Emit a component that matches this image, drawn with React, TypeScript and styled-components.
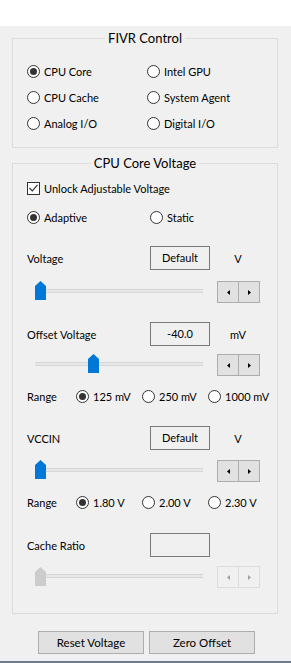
import React from 'react';
import styled, { createGlobalStyle } from 'styled-components';

const Global = createGlobalStyle`
  html, body { margin: 0; padding: 0; background: #f0f0f0; }
  body {
    width: 291px; height: 663px; overflow: hidden;
    font-family: Lato, "Liberation Sans", sans-serif; font-size: 11px; color: #000;
  }
  * { box-sizing: border-box; }
`;

const Window = styled.div`
  width: 291px; height: 663px;
  display: flex; flex-direction: column;
  background: #f0f0f0;
  border-bottom: 2px solid #6b7a8c;
`;

const TopStrip = styled.div`
  height: 26px; flex: none; background: #ffffff;
`;

const Group = styled.fieldset<{ $top: number; $pbottom: number }>`
  margin: ${p => p.$top}px 13px 0 12px;
  padding: 0 0 ${p => p.$pbottom}px 0;
  border: 1px solid #dcdcdc;
  min-width: 0;
`;

const GroupBody = styled.div<{ $ptop: number }>`
  display: flex; flex-direction: column;
  padding: ${p => p.$ptop}px 0 0 14px;
`;

const Legend = styled.legend`
  margin: 0 auto; padding: 0 3px;
  font-size: 13px; line-height: 16px;
`;

const RadioGrid = styled.div`
  display: grid;
  grid-template-columns: 120px 1fr;
  grid-auto-rows: 26px;
  align-items: center;
`;

const OptionLabel = styled.label<{ $w?: number }>`
  display: flex; align-items: center; gap: 4px;
  ${p => (p.$w ? `width: ${p.$w}px; flex: none;` : '')}
  white-space: nowrap;
`;

const RadioCircle = styled.span<{ $on?: boolean }>`
  width: 13px; height: 13px; flex: none;
  border: 1px solid #333333; border-radius: 50%;
  background: #ffffff;
  display: flex; align-items: center; justify-content: center;
  &::after {
    content: '';
    width: 7px; height: 7px; border-radius: 50%;
    background: ${p => (p.$on ? '#333333' : 'transparent')};
  }
`;

const CheckBox = styled.span`
  width: 13px; height: 13px; flex: none;
  border: 1px solid #333333; background: #ffffff;
  display: flex; align-items: center; justify-content: center;
`;

const Row = styled.div<{ $mt: number; $h?: number }>`
  display: flex; align-items: center;
  margin-top: ${p => p.$mt}px;
  height: ${p => p.$h ?? 20}px;
  flex: none;
`;

const FieldLabel = styled.span<{ $w: number }>`
  width: ${p => p.$w}px; flex: none; white-space: nowrap;
`;

const ValueBox = styled.div`
  width: 60px; height: 24px; flex: none;
  border: 1px solid #7a7a7a; background: #f0f0f0;
  display: flex; align-items: center; justify-content: center;
  padding-bottom: 2px;
`;

const Unit = styled.span`
  width: 42px; margin-left: 7px; text-align: center; flex: none;
`;

const SliderRow = styled.div<{ $mt: number }>`
  display: flex; align-items: flex-start;
  margin-top: ${p => p.$mt}px;
  padding-left: 8px;
  height: 22px; flex: none;
`;

const Slider = styled.div`
  position: relative; width: 168px; height: 22px; flex: none;
`;

const Track = styled.div`
  margin-top: 8px; height: 4px;
  border-top: 1px solid #d6d6d6; border-bottom: 1px solid #d6d6d6;
  background: #e7e7e7;
`;

const Thumb = styled.div<{ $disabled?: boolean }>`
  position: absolute; top: 0;
  width: 11px; height: 19px;
  background: ${p => (p.$disabled ? '#cccccc' : '#0078d7')};
  clip-path: polygon(0 5px, 5.5px 0, 11px 5px, 11px 19px, 0 19px);
`;

const Spin = styled.div<{ $disabled?: boolean }>`
  margin-left: 14px; height: 22px; flex: none;
  display: flex;
  border: 1px solid ${p => (p.$disabled ? '#dcdcdc' : '#adadad')};
  background: ${p => (p.$disabled ? '#f0f0f0' : '#e1e1e1')};
  color: ${p => (p.$disabled ? '#a0a0a0' : '#000000')};
`;

const SpinButton = styled.div`
  width: 20px; height: 20px;
  display: flex; align-items: center; justify-content: center;
`;

const SpinDivider = styled.div<{ $disabled?: boolean }>`
  width: 1px; background: ${p => (p.$disabled ? '#dcdcdc' : '#adadad')};
`;

const ButtonRow = styled.div`
  display: flex; gap: 5px;
  margin-top: 17px; padding-left: 38px;
`;

const PushButton = styled.button`
  width: 106px; height: 23px;
  border: 1px solid #adadad; background: #e1e1e1;
  font: inherit; font-size: 11.5px; color: #000; padding: 0;
`;

const Arrow = ({ dir }: { dir: 'l' | 'r' }) => (
  <svg width="3" height="5" viewBox="0 0 3 5">
    <polygon points={dir === 'l' ? '3,0 3,5 0,2.5' : '0,0 0,5 3,2.5'} fill="currentColor" />
  </svg>
);

const Radio = ({ label, on, w }: { label: string; on?: boolean; w?: number }) => (
  <OptionLabel $w={w}>
    <RadioCircle $on={on} />
    {label}
  </OptionLabel>
);

const SliderLine = ({ mt, pos, disabled }: { mt: number; pos: number; disabled?: boolean }) => (
  <SliderRow $mt={mt}>
    <Slider>
      <Track />
      <Thumb $disabled={disabled} style={{ left: pos, top: disabled ? 1 : 0 }} />
    </Slider>
    <Spin $disabled={disabled}>
      <SpinButton><Arrow dir="l" /></SpinButton>
      <SpinDivider $disabled={disabled} />
      <SpinButton><Arrow dir="r" /></SpinButton>
    </Spin>
  </SliderRow>
);

const ValueLine = ({ mt, label, value, unit }: { mt: number; label: string; value: string; unit: string }) => (
  <Row $mt={mt} $h={24}>
    <FieldLabel $w={123}>{label}</FieldLabel>
    <ValueBox>{value}</ValueBox>
    <Unit>{unit}</Unit>
  </Row>
);

const RangeLine = ({ mt, options }: { mt: number; options: string[] }) => (
  <Row $mt={mt}>
    <FieldLabel $w={49}>Range</FieldLabel>
    {options.map((o, i) => (
      <Radio key={o} label={o} on={i === 0} w={66} />
    ))}
  </Row>
);

export default function App() {
  return (
    <>
      <Global />
      <Window>
        <TopStrip />
        <Group $top={4} $pbottom={11}>
          <Legend>FIVR Control</Legend>
          <GroupBody $ptop={12}>
            <RadioGrid>
              <Radio label="CPU Core" on />
              <Radio label="Intel GPU" />
              <Radio label="CPU Cache" />
              <Radio label="System Agent" />
              <Radio label="Analog I/O" />
              <Radio label="Digital I/O" />
            </RadioGrid>
          </GroupBody>
        </Group>
        <Group $top={7} $pbottom={25}>
          <Legend>CPU Core Voltage</Legend>
          <GroupBody $ptop={0}>
            <Row $mt={7}>
              <OptionLabel>
                <CheckBox>
                  <svg width="9" height="8" viewBox="0 0 9 8">
                    <polyline points="0.5,4 3.3,6.8 8.5,0.8" fill="none" stroke="#333" strokeWidth="1.2" />
                  </svg>
                </CheckBox>
                Unlock Adjustable Voltage
              </OptionLabel>
            </Row>
            <Row $mt={9}>
              <Radio label="Adaptive" on w={123} />
              <Radio label="Static" />
            </Row>
            <ValueLine mt={19} label="Voltage" value="Default" unit="V" />
            <SliderLine mt={11} pos={0} />
            <ValueLine mt={19} label="Offset Voltage" value="-40.0" unit="mV" />
            <SliderLine mt={8} pos={53} />
            <RangeLine mt={10} options={['125 mV', '250 mV', '1000 mV']} />
            <ValueLine mt={20} label="VCCIN" value="Default" unit="V" />
            <SliderLine mt={10} pos={0} />
            <RangeLine mt={10} options={['1.80 V', '2.00 V', '2.30 V']} />
            <ValueLine mt={21} label="Cache Ratio" value="" unit="" />
            <SliderLine mt={9} pos={0} disabled />
          </GroupBody>
        </Group>
        <ButtonRow>
          <PushButton>Reset Voltage</PushButton>
          <PushButton>Zero Offset</PushButton>
        </ButtonRow>
      </Window>
    </>
  );
}
